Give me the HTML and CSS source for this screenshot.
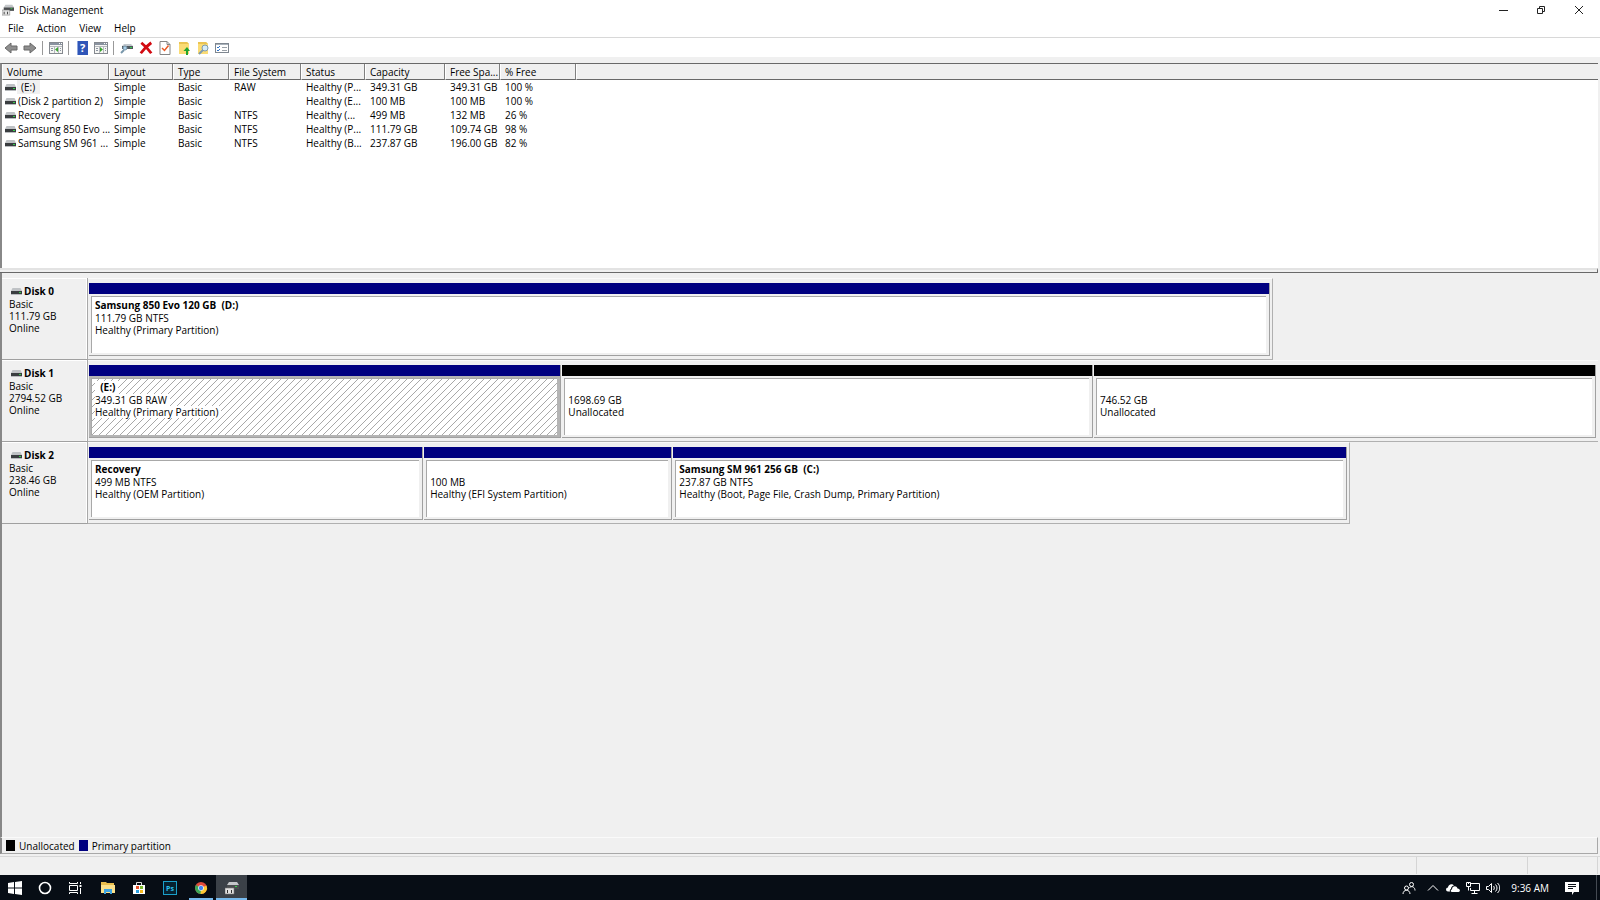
FILE: index.html
```html
<!DOCTYPE html>
<html lang="en">
<head>
    <meta charset="UTF-8">
    <meta name="viewport" content="width=device-width, initial-scale=1.0">
    <title>Disk Management</title>
    <link rel="stylesheet" href="styles.css">
</head>
<body>
    <svg class="defs" aria-hidden="true">
        <symbol id="drive" viewBox="0 0 11 7">
            <path d="M1.500 0h8L11 3H0z" fill="#bfc2c5"/>
            <rect y="3" width="11" height="3" fill="#3a3d40"/>
            <rect y="6" width="11" height="1" fill="#b9bcbf"/>
            <rect x="8" y="4" width="2" height="1" fill="#35d04a"/>
        </symbol>
        <symbol id="diskmgmt" viewBox="0 0 14 14">
            <path d="M4 1h8l2 3H2z" fill="#c4c7ca"/>
            <rect x="2" y="4" width="12" height="4" fill="#4a4d50"/>
            <rect x="10" y="5" width="2" height="1" fill="#35d04a"/>
            <path d="M0 7h9v6H0z" fill="#e2e2e2" stroke="#777" stroke-width=".6"/>
            <path d="M2 9h1v3H2zM6 9h1v3H6z" fill="#333"/>
        </symbol>
        <symbol id="arrow" viewBox="0 0 14 12">
            <path d="M1 6l6-5v3h6v4H7v3z" fill="#8f8f8f" stroke="#696969"/>
        </symbol>
        <symbol id="pane" viewBox="0 0 14 12">
            <rect x=".5" y=".5" width="13" height="11" fill="#f6f6f4" stroke="#85898f"/>
            <path d="M1 1h12v2H1z" fill="#8a93a0"/>
            <path d="M10 1h1v1h-1zM12 1h1v1h-1z" fill="#fff"/>
            <path d="M1 4.500h12M5.500 5v6M9.500 5v6" stroke="#b5b9be"/>
            <path d="M2 6h2v1H2zM2 8h2v1H2zM11 6h1v1h-1zM11 8h1v1h-1z" fill="#8a93a0"/>
        </symbol>
    </svg>

    <header class="titlebar">
        <svg class="app-icon"><use href="#diskmgmt"/></svg>
        <h1>Disk Management</h1>
        <div class="window-buttons">
            <button aria-label="Minimize"><svg viewBox="0 0 10 10"><path d="M1 5.500h9"/></svg></button>
            <button aria-label="Restore"><svg viewBox="0 0 10 10"><path d="M1.500 3.500h5v5h-5zM3.500 3V1.500h5v5H7"/></svg></button>
            <button aria-label="Close"><svg viewBox="0 0 10 10"><path d="M1 1l8 8M9 1L1 9"/></svg></button>
        </div>
    </header>

    <nav class="menubar">
        <button>File</button>
        <button>Action</button>
        <button>View</button>
        <button>Help</button>
    </nav>

    <div class="toolbar">
        <button aria-label="Back"><svg><use href="#arrow"/></svg></button>
        <button aria-label="Forward"><svg class="flip"><use href="#arrow"/></svg></button>
        <span class="sep"></span>
        <button aria-label="Show console tree"><svg viewBox="0 0 14 12"><use href="#pane"/><path d="M9 5v5L6 7.500z" fill="#3aa52f"/></svg></button>
        <span class="sep"></span>
        <button aria-label="Help"><svg viewBox="0 0 12 14"><rect x="1" width="11" height="14" fill="#2f55b8"/><path d="M1 0h1v14H1z" fill="#8ba4dd"/><text x="4" y="11" class="help-mark">?</text></svg></button>
        <button aria-label="Show action pane"><svg viewBox="0 0 14 12"><use href="#pane"/><path d="M6 5v5l3-2.500z" fill="#3aa52f"/></svg></button>
        <span class="sep"></span>
        <button aria-label="Rescan disks"><svg viewBox="0 0 14 12"><path d="M4 2h7l2 2H2z" fill="#c2c8cd"/><path d="M2 4h11v3H2z" fill="#50585e"/><path d="M10 5h2v1h-2z" fill="#35d04a"/><circle cx="5" cy="6" r="2" fill="#a9cfe8" stroke="#7896aa"/><path d="M4 8l-3 3" stroke="#7896aa" stroke-width="2"/></svg></button>
        <button aria-label="Delete"><svg viewBox="0 0 12 12"><path d="M2 1.500C5 4 8 7 10.500 10.500M10.500 1.500C7 4 4 7 1.500 10.500" stroke="#d20a11" stroke-width="2.400" fill="none"/></svg></button>
        <button aria-label="Properties"><svg viewBox="0 0 11 14"><path d="M.5.5h7l3 3v10H.5z" fill="#fff" stroke="#858585"/><path d="M7.500.5v3h3" fill="none" stroke="#858585"/><path d="M2.500 7L5 9.500l4-5" fill="none" stroke="#ea5a26" stroke-width="1.500"/></svg></button>
        <button aria-label="Up"><svg viewBox="0 0 12 14"><path d="M1 1h8l2 2v10H1z" fill="#fbdc75"/><path d="M1 1h8l2 2H1z" fill="#eac452"/><path d="M8 14V10H5.500L9 6l3 4h-2v4z" fill="#22a52d"/></svg></button>
        <button aria-label="Find"><svg viewBox="0 0 12 14"><path d="M1 1h8l2 2v10H1z" fill="#fbdc75"/><path d="M1 1h8l2 2H1z" fill="#eac452"/><circle cx="8" cy="7" r="3" fill="#d5ecf8" stroke="#7d9bb0"/><path d="M6 9l-4 4" stroke="#7d9bb0" stroke-width="2"/></svg></button>
        <button aria-label="Settings"><svg viewBox="0 0 14 12"><rect x=".5" y="1.500" width="13" height="9" fill="#fff" stroke="#7f8790"/><path d="M1 2h12v1H1z" fill="#a9b2bb"/><path d="M2 5l1 1 2-2M2 8l1 1 2-2" fill="none" stroke="#2f73c7"/><path d="M7 5.500h5M7 8.500h5" stroke="#9aa1a8"/></svg></button>
    </div>

    <main class="console">
        <section class="volumes">
            <table>
                <colgroup>
                    <col class="c-volume"><col class="c-layout"><col class="c-type"><col class="c-fs"><col class="c-status"><col class="c-capacity"><col class="c-space"><col class="c-free"><col>
                </colgroup>
                <thead>
                    <tr><th>Volume</th><th>Layout</th><th>Type</th><th>File System</th><th>Status</th><th>Capacity</th><th>Free Spa...</th><th>% Free</th><th></th></tr>
                </thead>
                <tbody>
                    <tr><td><svg class="drive"><use href="#drive"/></svg><span class="current">(E:)</span></td><td>Simple</td><td>Basic</td><td>RAW</td><td>Healthy (P...</td><td>349.31 GB</td><td>349.31 GB</td><td>100 %</td><td></td></tr>
                    <tr><td><svg class="drive"><use href="#drive"/></svg><span>(Disk 2 partition 2)</span></td><td>Simple</td><td>Basic</td><td></td><td>Healthy (E...</td><td>100 MB</td><td>100 MB</td><td>100 %</td><td></td></tr>
                    <tr><td><svg class="drive"><use href="#drive"/></svg><span>Recovery</span></td><td>Simple</td><td>Basic</td><td>NTFS</td><td>Healthy (...</td><td>499 MB</td><td>132 MB</td><td>26 %</td><td></td></tr>
                    <tr><td><svg class="drive"><use href="#drive"/></svg><span>Samsung 850 Evo ...</span></td><td>Simple</td><td>Basic</td><td>NTFS</td><td>Healthy (P...</td><td>111.79 GB</td><td>109.74 GB</td><td>98 %</td><td></td></tr>
                    <tr><td><svg class="drive"><use href="#drive"/></svg><span>Samsung SM 961 ...</span></td><td>Simple</td><td>Basic</td><td>NTFS</td><td>Healthy (B...</td><td>237.87 GB</td><td>196.00 GB</td><td>82 %</td><td></td></tr>
                </tbody>
            </table>
        </section>
        <div class="splitter"></div>

        <section class="disks">
            <article class="disk">
                <div class="disk-label">
                    <h2><svg class="drive"><use href="#drive"/></svg>Disk 0</h2>
                    <p>Basic</p><p>111.79 GB</p><p>Online</p>
                </div>
                <div class="strip" style="width: 78.5%">
                    <div class="partition" style="flex-grow: 100">
                        <div class="box"><h3>Samsung 850 Evo 120 GB&nbsp; (D:)</h3><p>111.79 GB NTFS</p><p>Healthy (Primary Partition)</p></div>
                    </div>
                </div>
            </article>
            <article class="disk">
                <div class="disk-label">
                    <h2><svg class="drive"><use href="#drive"/></svg>Disk 1</h2>
                    <p>Basic</p><p>2794.52 GB</p><p>Online</p>
                </div>
                <div class="strip full">
                    <div class="partition selected" style="flex-grow: 472">
                        <div class="box"><h3>&nbsp; (E:)</h3><p>349.31 GB RAW</p><p>Healthy (Primary Partition)</p></div>
                    </div>
                    <div class="partition unallocated" style="flex-grow: 531">
                        <div class="box"><h3></h3><p>1698.69 GB</p><p>Unallocated</p></div>
                    </div>
                    <div class="partition unallocated" style="flex-grow: 502">
                        <div class="box"><h3></h3><p>746.52 GB</p><p>Unallocated</p></div>
                    </div>
                </div>
            </article>
            <article class="disk">
                <div class="disk-label">
                    <h2><svg class="drive"><use href="#drive"/></svg>Disk 2</h2>
                    <p>Basic</p><p>238.46 GB</p><p>Online</p>
                </div>
                <div class="strip" style="width: 83.6%">
                    <div class="partition" style="flex-grow: 332">
                        <div class="box"><h3>Recovery</h3><p>499 MB NTFS</p><p>Healthy (OEM Partition)</p></div>
                    </div>
                    <div class="partition" style="flex-grow: 245">
                        <div class="box"><h3></h3><p>100 MB</p><p>Healthy (EFI System Partition)</p></div>
                    </div>
                    <div class="partition" style="flex-grow: 676">
                        <div class="box"><h3>Samsung SM 961 256 GB&nbsp; (C:)</h3><p>237.87 GB NTFS</p><p>Healthy (Boot, Page File, Crash Dump, Primary Partition)</p></div>
                    </div>
                </div>
            </article>
        </section>

        <div class="legend">
            <span class="swatch black"></span>Unallocated
            <span class="swatch navy"></span>Primary partition
        </div>
    </main>

    <div class="statusbar"><span></span><span></span><span></span></div>

    <footer class="taskbar">
        <div class="system">
            <button aria-label="Start"><svg viewBox="0 0 14 14"><path d="M0 2l6-1v5.500H0zM7 .900L14 0v6.500H7zM0 7.500h6V13l-6-1zM7 7.500h7V14l-7-.900z" fill="#fff"/></svg></button>
            <button aria-label="Cortana"><svg viewBox="0 0 14 14"><circle cx="7" cy="7" r="5.500" fill="none" stroke="#fff" stroke-width="1.600"/></svg></button>
            <button aria-label="Task view"><svg viewBox="0 0 14 14"><path d="M1.500 4.500h8v5h-8zM1.500 1v1.500h8V1M1.500 13v-1.500h8V13M12.500 1v2M12.500 7v6" fill="none" stroke="#fff"/><path d="M11.500 4h2v2h-2z" fill="#fff"/></svg></button>
        </div>
        <button aria-label="File Explorer"><svg viewBox="0 0 14 14"><path d="M0 1h5l1 1h7v10H0z" fill="#e9bd4c"/><path d="M0 4h14v8H0z" fill="#fbe08a"/><path d="M3 13V8h8v5H9v-2H5v2z" fill="#3ea3e0"/></svg></button>
        <button aria-label="Store"><svg viewBox="0 0 14 14"><path d="M4.500 4V1.500h5V4" fill="none" stroke="#ddd"/><path d="M1 4h12v9H1z" fill="#fff"/><path d="M4 5h3v3H4z" fill="#e8502a"/><path d="M8 5h3v3H8z" fill="#7cb82f"/><path d="M4 9h3v3H4z" fill="#2b9fe0"/><path d="M8 9h3v3H8z" fill="#f5b81f"/></svg></button>
        <button aria-label="Photoshop"><svg viewBox="0 0 14 14"><rect x=".5" y=".5" width="13" height="13" fill="#06212f" stroke="#1a9fc9"/><text x="3" y="10" class="ps-mark">Ps</text></svg></button>
        <button aria-label="Chrome" class="running"><svg viewBox="0 0 14 14"><circle cx="7" cy="7" r="6" fill="#e04a3a"/><path d="M7 7L1.800 4A6 6 0 0 0 7 13z" fill="#3aa757"/><path d="M7 7l5.500-2.500A6 6 0 0 1 6.500 13z" fill="#fcc934"/><circle cx="7" cy="7" r="2.800" fill="#fff"/><circle cx="7" cy="7" r="2.200" fill="#4285f4"/></svg></button>
        <button aria-label="Disk Management" class="active"><svg><use href="#diskmgmt"/></svg></button>
        <div class="tray">
            <button aria-label="People" class="people"><svg viewBox="0 0 14 14"><g fill="none" stroke="#fff"><circle cx="9.500" cy="3.500" r="2"/><circle cx="4.500" cy="7" r="2"/><path d="M1 13c0-5 7-5 7 0M7.500 6.500c3-2 5.500 0 5.500 3"/></g></svg></button>
            <button aria-label="Show hidden icons"><svg viewBox="0 0 14 14"><path d="M2 9.500l5-5 5 5" fill="none" stroke="#fff"/></svg></button>
            <button aria-label="OneDrive"><svg viewBox="0 0 14 14"><path d="M2 10.500a2 2 0 0 1 0-4C2 3.500 6 2 8 4.500 5.500 5 5 7 5 8c-1.500.5-1.500 2-.5 2.500z" fill="#fff"/><path d="M5.500 11c-1.500-1-.5-2.500.5-2.500C6 5 10.500 4 11.500 7.500c3 0 3 3.500 1 3.500z" fill="#fff"/></svg></button>
            <button aria-label="Network"><svg viewBox="0 0 14 14"><path d="M5 2.500h8.500v7H4.500V7M5.500 12.500h6M8.500 10v2M.5 1.500h4v4h-4zM2.500 5.500v4M2.500 1v2" fill="none" stroke="#fff"/></svg></button>
            <button aria-label="Volume"><svg viewBox="0 0 14 14"><path d="M.5 5.500h2l3-3v9l-3-3h-2zM7.500 5c1 1 1 3 0 4M9.500 3.500c2 2 2 5 0 7M11.500 2c3 3 3 7 0 10" fill="none" stroke="#fff"/></svg></button>
            <time>9:36 AM</time>
            <button aria-label="Notifications" class="notify"><svg viewBox="0 0 14 14"><path d="M0 1h14v10H9l-2 3v-3H0z" fill="#fff"/><path d="M3 3.500h8M3 5.500h8M3 7.500h5" stroke="#0a1018"/></svg></button>
        </div>
    </footer>
</body>
</html>
```

FILE: styles.css
```css
* {
    box-sizing: border-box;
}

body {
    margin: 0;
    height: 100vh;
    display: flex;
    flex-direction: column;
    background: #fff;
    color: #000;
    font-family: "Open Sans", "Noto Sans", sans-serif;
    font-size: 10px;
    line-height: 14px;
    white-space: nowrap;
}

h1, h2, h3, p {
    margin: 0;
    font-size: 10px;
}

button {
    border: 0;
    padding: 0;
    background: none;
    color: inherit;
    font: inherit;
}

svg {
    display: block;
    flex-shrink: 0;
    width: 14px;
    height: 14px;
}

.defs {
    display: none;
}

.titlebar {
    display: flex;
    align-items: center;
    gap: 5px;
    height: 20px;
    padding: 0 2px;
}

.titlebar h1 {
    font-weight: 400;
    flex: 1;
}

.app-icon {
    width: 12px;
    height: 12px;
}

.window-buttons {
    display: flex;
    height: 18px;
}

.window-buttons button {
    display: grid;
    place-items: center;
    width: 38px;
}

.window-buttons svg {
    width: 10px;
    height: 10px;
    fill: none;
    stroke: #222;
}

.menubar {
    display: flex;
    gap: 13px;
    height: 18px;
    padding: 0 8px 2px;
    border-bottom: 1px solid #d8d8d8;
}

.toolbar {
    display: flex;
    align-items: center;
    gap: 5px;
    height: 19px;
    padding-left: 4px;
}

.sep {
    width: 1px;
    height: 14px;
    margin-right: 1px;
    background: #999;
}

.flip {
    transform: scaleX(-1);
}

.help-mark {
    fill: #fff;
    font-size: 11px;
    font-weight: 700;
}

.console {
    flex: 1;
    display: flex;
    flex-direction: column;
    min-height: 0;
    padding-right: 2px;
    border-top: 6px solid #f0f0f0;
    background: #f0f0f0;
}

.volumes {
    height: 205px;
    border-top: 1px solid #696969;
    border-left: 2px solid #888;
    background: #fff;
}

table {
    width: 100%;
    table-layout: fixed;
    border-collapse: separate;
    border-spacing: 0;
}

.c-volume { width: 107px; }
.c-layout { width: 64px; }
.c-type { width: 56px; }
.c-fs { width: 72px; }
.c-status { width: 64px; }
.c-capacity { width: 80px; }
.c-space { width: 55px; }
.c-free { width: 76px; }

th {
    height: 16px;
    padding: 0 0 0 4px;
    border-right: 1px solid #808080;
    border-bottom: 1px solid #696969;
    border-left: 1px solid #fff;
    background: #f0f0f0;
    font-weight: 400;
    text-align: left;
}

th:last-child {
    border-right: 0;
}

td {
    height: 14px;
    padding: 0 0 0 5px;
}

td:first-child {
    display: flex;
    align-items: center;
    gap: 1px;
    padding-left: 3px;
}

td span {
    padding: 0 1px;
}

td .current {
    padding: 0 5px 0 4px;
    background: #f0f0f0;
}

.drive {
    width: 11px;
    height: 7px;
}

.splitter {
    height: 5px;
    border-top: 2px solid #e3e3e3;
    border-bottom: 1px solid #696969;
    border-right: 1px solid #696969;
}

.disks {
    flex: 1;
    padding-top: 5px;
    border-left: 2px solid #888;
}

.disk {
    display: grid;
    grid-template-columns: 86px 1fr;
    height: 82px;
}

.disk-label {
    padding: 6px 0 0 7px;
    border-right: 1px solid #a8a8a8;
    border-bottom: 1px solid #a0a0a0;
    box-shadow: inset -1px 1px #fff;
    line-height: 12px;
}

.disk-label h2 {
    display: flex;
    align-items: center;
    gap: 2px;
    padding-left: 2px;
    line-height: 14px;
}

.strip {
    display: flex;
    gap: 1px;
    padding: 4px 2px 3px 1px;
    border: solid #b0b0b0;
    border-width: 1px 1px 1px 0;
    border-top-color: #fafafa;
}

.full {
    border-right: 0;
}

.partition {
    flex: 1 1 0;
    display: flex;
    flex-direction: column;
    padding: 0 3px 2px 2px;
    border-right: 1px solid #a0a0a0;
    border-bottom: 1px solid #a0a0a0;
}

/* coloured band above each partition */
.partition::before {
    content: "";
    height: 11px;
    margin: 0 -3px 2px -2px;
    background: #000080;
}

.unallocated::before {
    background: #000;
}

.box {
    flex: 1;
    padding: 2px 0 0 3px;
    border-top: 1px solid #a8a8a8;
    border-left: 1px solid #a8a8a8;
    background: #fff;
    line-height: 12px;
}

.box h3 {
    height: 13px;
    line-height: 13px;
}

.selected {
    background: #b4b4b4;
}

.selected .box {
    background: linear-gradient(135deg, #fff 44%, #a8a8a8 44% 56%, #fff 56%) 0 0 / 7px 7px;
}

.selected h3,
.selected p {
    width: fit-content;
    padding-right: 3px;
    background: #fff;
}

.legend {
    display: flex;
    align-items: center;
    gap: 4px;
    height: 17px;
    padding-left: 4px;
    border: solid #a8a8a8;
    border-width: 1px 1px 1px 2px;
    border-top-color: #fafafa;
    border-left-color: #888;
}

.swatch {
    width: 9px;
    height: 11px;
}

.black { background: #000; }
.navy { background: #000080; }

.statusbar {
    display: flex;
    justify-content: flex-end;
    height: 21px;
    padding: 1px 2px 1px 0;
    border-top: 2px solid #f0f0f0;
    background: #f0f0f0;
    box-shadow: inset 0 1px #d8d8d8;
}

.statusbar span {
    width: 111px;
    border-left: 1px solid #d5d5d5;
}

.statusbar span:nth-child(2) {
    width: 70px;
}

.statusbar span:last-child {
    width: 1px;
}

.taskbar {
    display: flex;
    height: 25px;
    background: #070d15;
    color: #fff;
}

.taskbar button {
    display: grid;
    place-items: center;
    width: 31px;
}

.system {
    display: flex;
    margin-right: 2px;
}

.system button {
    width: 30px;
}

.taskbar .running {
    width: 24px;
    margin: 0 3px 0 4px;
    padding-top: 2px;
    border-bottom: 2px solid #76b9ed;
}

.taskbar .active {
    padding-top: 2px;
    border-bottom: 2px solid #76b9ed;
    background: #3b4148;
}

.ps-mark {
    fill: #2bc0ee;
    font-size: 7px;
    font-weight: 700;
}

.tray {
    display: flex;
    align-items: center;
    margin-left: auto;
    margin-right: 3px;
    padding-right: 9px;
    border-right: 1px solid #444a52;
}

.tray button {
    width: 20px;
}

.tray .people {
    margin-right: 4px;
}

.tray time {
    padding: 0 8px;
}

.tray .notify {
    width: 30px;
}
```
